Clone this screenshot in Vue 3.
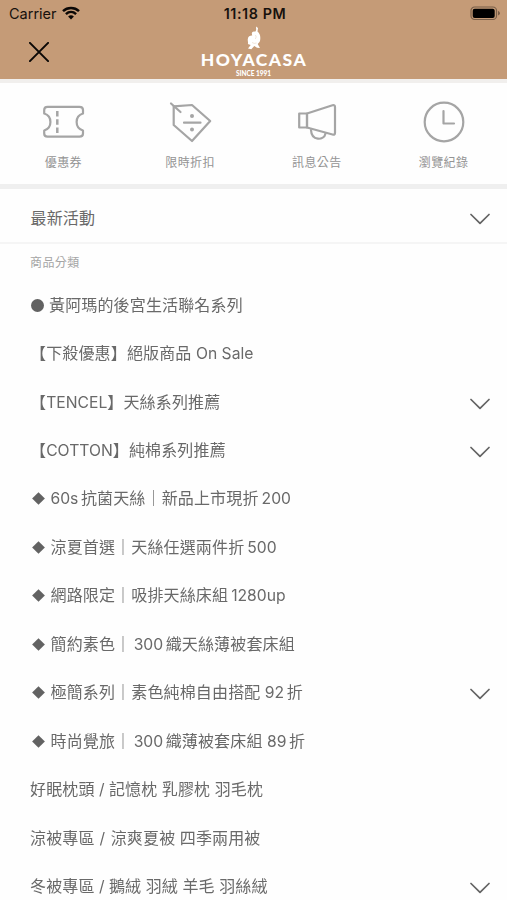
<script setup>
const shortcuts = [
  { icon: 'ticket', label: '優惠券' },
  { icon: 'tag', label: '限時折扣' },
  { icon: 'horn', label: '訊息公告' },
  { icon: 'clock', label: '瀏覽紀錄' },
]

const categories = [
  { mark: 'dot', text: '黃阿瑪的後宮生活聯名系列' },
  { text: '【下殺優惠】絕版商品 On Sale' },
  { text: '【TENCEL】天絲系列推薦', more: true },
  { text: '【COTTON】純棉系列推薦', more: true },
  { mark: 'diamond', text: '60s抗菌天絲｜新品上市現折200' },
  { mark: 'diamond', text: '涼夏首選｜天絲任選兩件折500' },
  { mark: 'diamond', text: '網路限定｜吸排天絲床組1280up' },
  { mark: 'diamond', text: '簡約素色｜ 300織天絲薄被套床組' },
  { mark: 'diamond', text: '極簡系列｜素色純棉自由搭配 92折', more: true },
  { mark: 'diamond', text: '時尚覺旅｜ 300織薄被套床組 89折' },
  { text: '好眠枕頭 / 記憶枕 乳膠枕 羽毛枕' },
  { text: '涼被專區 / 涼爽夏被 四季兩用被', wideSlash: true },
  { text: '冬被專區 / 鵝絨 羽絨 羊毛 羽絲絨', more: true },
]

// Splits a label into Han and Latin runs so a thin gap can separate them.
function runs(text) {
  const parts = text.match(/[ -~]+|[^ -~]+/g)
  return parts.map((part, i) => {
    const latin = /^[ -~]/.test(part)
    const prev = parts[i - 1] || ''
    const next = parts[i + 1] || ''
    return {
      part,
      latin,
      bar: latin && prev.endsWith('｜'),
      slash: part.includes('/'),
      before: latin && /[^【｜]$/.test(prev) && !part.startsWith(' '),
      after: latin && /^[^】]/.test(next) && !part.endsWith(' '),
    }
  })
}
</script>

<template>
  <div class="screen">
    <header class="header">
      <div class="status">
        <div class="carrier">
          <span>Carrier</span>
          <svg class="wifi" width="18" height="14" viewBox="0 0 18 14">
            <path d="M1 5.1C5.500 .9 12.500 .9 17 5.100" />
            <path d="M3.900 8.100C6.900 5.400 11.100 5.400 14.100 8.100" />
            <path class="solid" d="M9 13.400L6.100 10.500Q9 8.200 11.900 10.500Z" />
          </svg>
        </div>
        <span class="time">11:18 PM</span>
        <svg class="battery" width="31" height="15" viewBox="0 0 31 15">
          <rect class="shell" x="1" y="1" width="25.500" height="12.500" rx="3.600" />
          <rect x="2.700" y="2.700" width="22" height="9.200" rx="2" />
          <path class="tip" d="M28 4.800Q30 6 30 7.200T28 9.600Z" />
        </svg>
      </div>
      <div class="navbar">
        <svg class="close" width="20" height="20" viewBox="0 0 20 20">
          <path d="M.900 .900L19.100 19.100M19.100 .900L.900 19.100" />
        </svg>
        <div class="brand">
          <svg class="emblem" width="14" height="24" viewBox="0 0 14 24">
            <path d="M9 .500L11 2L10.500 5.500C12.500 7 13.500 9.500 13.300 12.500C13.300 15 12.500 16.500 10.700 18L13 22L10 21.700L7.300 20L4.300 23.300L1 22.500L3.700 19L.800 18C1.600 17 .500 15.500 .800 13C1.200 10.500 3 9.500 5.200 9.600L4.800 7.500C4.900 5.800 6.500 5 8.200 5.800L9.200 4Z" />
            <path class="crease" d="M8.500 9Q10 11 8.300 13M5 16.500Q7 18 9.500 17" />
          </svg>
          <span class="name">HOYACASA</span>
          <span class="since">SINCE 1991</span>
        </div>
      </div>
    </header>

    <nav class="shortcuts">
      <a v-for="item in shortcuts" :key="item.icon" class="shortcut">
        <svg class="glyph" width="44" height="44" viewBox="0 0 44 44">
          <template v-if="item.icon === 'ticket'">
            <path d="M6.500 6.800H38.500Q42 6.800 42 10V13.500C33.500 16 33.500 28 42 30.500V33.500Q42 36.700 38.500 36.700H6.500Q3.200 36.700 3.200 33.500V30.500C11.500 28 11.500 16 3.200 13.500V10Q3.200 6.800 6.500 6.800Z" />
            <path class="dash" d="M16.300 11V16.500M16.300 19.200V24.700M16.300 27.500V33" />
          </template>
          <template v-else-if="item.icon === 'tag'">
            <path d="M5.700 6.300L24 5L42.200 21L24 41L5.700 25Z" />
            <path d="M3 3.500L12.500 12M16 22.700H32.500" />
            <circle class="fill" cx="24" cy="16" r="2" />
            <circle class="fill" cx="24" cy="29.500" r="2" />
          </template>
          <template v-else-if="item.icon === 'horn'">
            <path d="M12 13.500L37.500 5.300Q40 4.500 40 7V33Q40 35.300 37.500 34.500L12 27.500Z" />
            <path d="M4.200 13.500H12V27.500H4.200ZM16 30C16.500 41 29 41 30.500 33.500" />
          </template>
          <template v-else>
            <circle cx="22" cy="22" r="19.300" />
            <path d="M21.500 11V23.500H32" />
          </template>
        </svg>
        <span class="caption">{{ item.label }}</span>
      </a>
    </nav>

    <section class="news">
      <span>最新活動</span>
      <svg class="chevron" width="20" height="12" viewBox="0 0 20 12">
        <path d="M1 1.500L10 10.300L19 1.500" />
      </svg>
    </section>

    <h2 class="heading">商品分類</h2>
    <ul class="list">
      <li v-for="row in categories" :key="row.text" class="row">
        <span v-if="row.mark" class="mark" :class="{ tight: row.mark === 'dot' }">
          <i :class="row.mark"></i>
        </span>
        <span class="label"><span
          v-for="(run, i) in runs(row.text)"
          :key="i"
          :class="{ latin: run.latin, bar: run.bar, before: run.before, after: run.after, slash: run.slash, wide: run.slash && row.wideSlash }"
        >{{ run.part }}</span></span>
        <svg v-if="row.more" class="chevron" width="20" height="12" viewBox="0 0 20 12">
          <path d="M1 1.500L10 10.300L19 1.500" />
        </svg>
      </li>
    </ul>
  </div>
</template>

<style>
body {
  margin: 0;
  background: #fefefe;
}
</style>

<style scoped>
.screen {
  width: 507px;
  height: 900px;
  overflow: hidden;
  background: #fefefe;
  color: #696969;
  font-family: Inter, "Noto Sans CJK TC", sans-serif;
}
.header {
  box-sizing: border-box;
  height: 83px;
  background: #c59b77;
  border-bottom: 4px solid #f1efed;
}
.status {
  display: grid;
  grid-template-columns: 1fr auto 1fr;
  align-items: center;
  height: 27px;
  padding: 0 6px 0 9px;
  color: #17110d;
  font-size: 14.500px;
}
.carrier {
  display: flex;
  align-items: center;
  gap: 5px;
}
.time {
  font-weight: 600;
  font-size: 14.300px;
  letter-spacing: 0.600px;
}
.wifi {
  margin-top: -2px;
}
.wifi path {
  fill: none;
  stroke: #0b0806;
  stroke-width: 2.500;
}
.wifi .solid {
  fill: #0b0806;
  stroke: none;
}
.battery {
  justify-self: end;
}
.battery .shell {
  fill: none;
  stroke: #795f49;
  stroke-width: 1.200;
}
.battery .tip {
  fill: #795f49;
}
.navbar {
  display: grid;
  grid-template-columns: 1fr auto 1fr;
  padding: 0 29px;
}
.close {
  margin-top: 15px;
}
.close path {
  stroke: #0b0806;
  stroke-width: 2;
  stroke-linecap: round;
}
.brand {
  display: flex;
  flex-direction: column;
  align-items: center;
  color: #fff;
  font-family: Lato, sans-serif;
}
.emblem {
  fill: #fff;
  margin-top: -1px;
}
.crease {
  fill: none;
  stroke: #e6d3c3;
  stroke-width: 0.600;
}
.name {
  margin-top: 1px;
  padding-left: 1px;
  font-size: 17.500px;
  font-weight: 900;
  line-height: 18px;
  letter-spacing: 1.500px;
}
.since {
  font-size: 6.500px;
  font-weight: 900;
  line-height: 9px;
}
.shortcuts {
  display: grid;
  grid-template-columns: repeat(4, 1fr);
  box-sizing: border-box;
  height: 106px;
  border-bottom: 5px solid #efefef;
}
.shortcut {
  display: flex;
  flex-direction: column;
  align-items: center;
  padding-top: 17px;
}
.glyph {
  fill: none;
  stroke: #a5a5a5;
  stroke-width: 2.200;
  stroke-linejoin: round;
  stroke-linecap: round;
}
.glyph .dash {
  stroke-linecap: butt;
  stroke-width: 2.500;
}
.glyph .fill {
  fill: #a5a5a5;
  stroke: none;
}
.caption {
  margin-top: 10px;
  color: #949494;
  font-size: 12px;
  line-height: 18px;
  letter-spacing: 0.400px;
}
.news {
  display: flex;
  align-items: center;
  justify-content: space-between;
  box-sizing: border-box;
  height: 55px;
  padding: 4px 17px 0 30.500px;
  border-bottom: 2px solid #f5f5f5;
  font-size: 16px;
  letter-spacing: 0.150px;
}
.news span {
  margin-top: -2px;
}
.chevron {
  flex: none;
  margin-top: 3px;
  fill: none;
  stroke: #646464;
  stroke-width: 1.700;
  stroke-linecap: round;
  stroke-linejoin: round;
}
.heading {
  margin: 0;
  padding: 10px 30px 0;
  color: #a5a5a5;
  font-size: 12px;
  font-weight: 400;
  line-height: 18px;
  letter-spacing: 0.400px;
}
.list {
  margin: 8.500px 0 0;
  padding: 0;
  list-style: none;
  will-change: transform;
}
.row {
  display: flex;
  align-items: center;
  height: 48.450px;
  padding: 0 17px 0 30px;
}
.label {
  flex: 1;
  font-size: 16px;
  line-height: 24px;
  letter-spacing: 0.150px;
  white-space: pre;
}
.latin {
  font-size: 15.700px;
  letter-spacing: 0;
}
.bar {
  margin-left: -2px;
}
.before {
  margin-left: 3px;
}
.after {
  margin-right: 2.500px;
}
.slash {
  font-size: 15.500px;
}
.wide {
  letter-spacing: 0.600px;
}
.mark {
  display: flex;
  flex: none;
  align-items: center;
  width: 20.500px;
}
.mark.tight {
  width: 19px;
}
.dot {
  width: 13px;
  height: 13px;
  margin-left: 1px;
  border-radius: 50%;
  background: #626262;
}
.diamond {
  width: 9px;
  height: 9px;
  margin-left: 4px;
  background: #626262;
  transform: rotate(45deg);
}
</style>
